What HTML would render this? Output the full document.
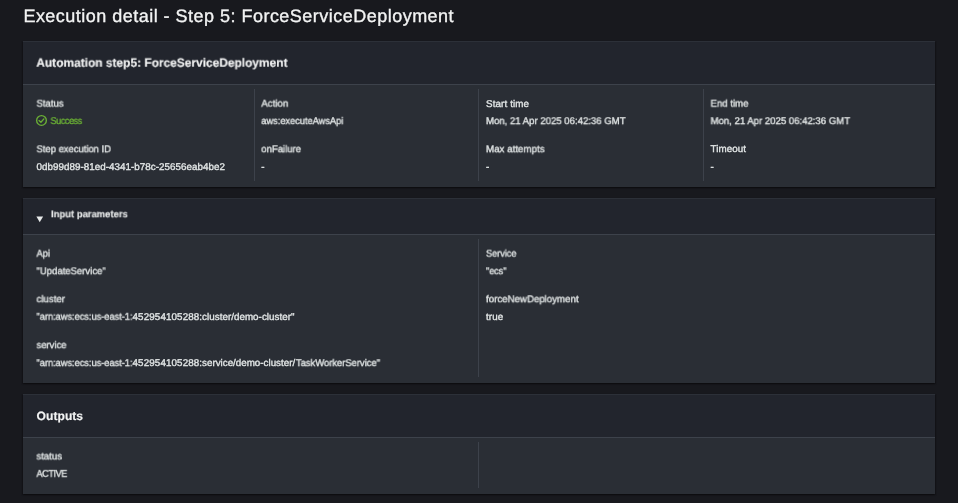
<!DOCTYPE html>
<html lang="en"><head><meta charset="utf-8"><title>Execution detail - Step 5: ForceServiceDeployment</title>
<style>
html,body{margin:0;padding:0;}
body{width:958px;height:503px;overflow:hidden;background:#18191e;position:relative;font-family:"Liberation Sans",sans-serif;color:#e2e6e6;}
.t{position:absolute;white-space:pre;text-rendering:geometricPrecision;transform-origin:0 0;will-change:transform;-webkit-text-stroke:0.35px currentColor;filter:blur(0.25px);}
.panel{position:absolute;left:23px;width:912px;background:#2a2e35;box-shadow:0 1px 2px 0 rgba(0,0,0,.28),1px 1px 1px 0 rgba(0,0,0,.16),-1px 1px 1px 0 rgba(0,0,0,.16);}
.hdr{position:absolute;left:0;top:0;width:100%;background:#22252d;border-top:1px solid #2c3038;border-bottom:1px solid #3d424b;box-sizing:border-box;}
.vd{position:absolute;width:1px;background:#3d424b;}
</style></head>
<body>
<div class="panel" style="top:41px;height:146px"><div class="hdr" style="height:44px"></div></div>
<div class="panel" style="top:198px;height:185px"><div class="hdr" style="height:37px"></div></div>
<div class="panel" style="top:394px;height:100px"><div class="hdr" style="height:44px"></div></div>
<div class="vd" style="left:254px;top:89px;height:92px"></div>
<div class="vd" style="left:478px;top:89px;height:92px"></div>
<div class="vd" style="left:703px;top:89px;height:92px"></div>
<div class="vd" style="left:478px;top:239px;height:138px"></div>
<div class="vd" style="left:478px;top:442px;height:46px"></div>
<svg style="position:absolute;left:35px;top:114px" width="13" height="13" viewBox="0 0 13 13" fill="none" stroke="#6aaf35" stroke-width="1.35" stroke-linecap="round" stroke-linejoin="round"><circle cx="6.5" cy="6.45" r="4.85"/><path d="M4.0 6.6l1.9 1.6L8.9 4.9"/></svg>
<svg style="position:absolute;left:36px;top:216px" width="8" height="8" viewBox="0 0 8 8"><path d="M0.4 0.5h6.7L3.75 6.2z" fill="#e8eaea"/></svg>
<div class="t" style="left:23px;top:5px;font-size:18.0px;line-height:22px;color:#f2f3f3;letter-spacing:0.479px;transform:translate(0.40px,0.00px);">Execution detail - Step 5: ForceServiceDeployment</div>
<div class="t" style="left:36px;top:54px;font-size:12.1px;line-height:16px;font-weight:700;-webkit-text-stroke:0.15px currentColor;color:#f2f3f3;transform:translate(0.30px,0.70px) scaleX(0.9862);">Automation step5: ForceServiceDeployment</div>
<div class="t" style="left:36px;top:97px;font-size:9.8px;line-height:13px;transform:translate(0.50px,0.60px) scaleX(0.9719);">Status</div>
<div class="t" style="left:50px;top:115px;font-size:9.8px;line-height:13px;color:#6aaf35;letter-spacing:-0.473px;transform:translate(0.50px,0.00px) scaleX(0.93);">Success</div>
<div class="t" style="left:36px;top:143px;font-size:9.8px;line-height:13px;transform:translate(0.50px,0.20px) scaleX(0.9632);">Step execution ID</div>
<div class="t" style="left:36px;top:160px;font-size:9.8px;line-height:13px;letter-spacing:0.047px;transform:translate(0.50px,0.70px);">0db99d89-81ed-4341-b78c-25656eab4be2</div>
<div class="t" style="left:261px;top:97px;font-size:9.8px;line-height:13px;transform:translate(0.30px,0.60px) scaleX(0.9951);">Action</div>
<div class="t" style="left:261px;top:115px;font-size:9.8px;line-height:13px;transform:translate(0.30px,0.10px) scaleX(0.9430);">aws:executeAwsApi</div>
<div class="t" style="left:261px;top:143px;font-size:9.8px;line-height:13px;transform:translate(0.30px,0.20px) scaleX(0.9695);">onFailure</div>
<div class="t" style="left:261px;top:160px;font-size:9.8px;line-height:13px;transform:translate(0.30px,0.70px);">-</div>
<div class="t" style="left:486px;top:97px;font-size:9.8px;line-height:13px;letter-spacing:0.120px;transform:translate(0.00px,0.60px);">Start time</div>
<div class="t" style="left:486px;top:115px;font-size:9.8px;line-height:13px;transform:translate(0.00px,0.10px) scaleX(0.9777);">Mon, 21 Apr 2025 06:42:36 GMT</div>
<div class="t" style="left:486px;top:143px;font-size:9.8px;line-height:13px;transform:translate(0.00px,0.20px) scaleX(0.9947);">Max attempts</div>
<div class="t" style="left:486px;top:160px;font-size:9.8px;line-height:13px;transform:translate(0.00px,0.70px);">-</div>
<div class="t" style="left:710px;top:97px;font-size:9.8px;line-height:13px;transform:translate(0.60px,0.60px) scaleX(0.9775);">End time</div>
<div class="t" style="left:710px;top:115px;font-size:9.8px;line-height:13px;transform:translate(0.60px,0.10px) scaleX(0.9770);">Mon, 21 Apr 2025 06:42:36 GMT</div>
<div class="t" style="left:710px;top:143px;font-size:9.8px;line-height:13px;letter-spacing:0.061px;transform:translate(0.60px,0.20px);">Timeout</div>
<div class="t" style="left:710px;top:160px;font-size:9.8px;line-height:13px;transform:translate(0.60px,0.70px);">-</div>
<div class="t" style="left:51px;top:208px;font-size:9.8px;line-height:13px;font-weight:700;-webkit-text-stroke:0.15px currentColor;color:#e6e8e8;transform:translate(0.00px,0.30px) scaleX(0.9660);">Input parameters</div>
<div class="t" style="left:36px;top:247px;font-size:9.8px;line-height:13px;transform:translate(0.50px,0.60px) scaleX(0.9526);">Api</div>
<div class="t" style="left:36px;top:265px;font-size:9.8px;line-height:13px;transform:translate(0.50px,0.20px) scaleX(0.9717);">&quot;UpdateService&quot;</div>
<div class="t" style="left:36px;top:293px;font-size:9.8px;line-height:13px;transform:translate(0.50px,0.20px) scaleX(0.9875);">cluster</div>
<div class="t" style="left:36px;top:310px;font-size:9.8px;line-height:13px;transform:translate(0.50px,0.70px) scaleX(0.9409);">&quot;arn:aws:ecs:us-east-1:</div>
<div class="t" style="left:132px;top:310px;font-size:9.8px;line-height:13px;letter-spacing:0.128px;transform:translate(0.50px,0.70px);">452954105288</div>
<div class="t" style="left:199px;top:310px;font-size:9.8px;line-height:13px;letter-spacing:0.038px;transform:translate(0.30px,0.70px);">:cluster/demo-cluster&quot;</div>
<div class="t" style="left:36px;top:339px;font-size:9.8px;line-height:13px;transform:translate(0.50px,0.20px) scaleX(0.9663);">service</div>
<div class="t" style="left:36px;top:357px;font-size:9.8px;line-height:13px;transform:translate(0.50px,0.10px) scaleX(0.9409);">&quot;arn:aws:ecs:us-east-1:</div>
<div class="t" style="left:132px;top:357px;font-size:9.8px;line-height:13px;letter-spacing:0.128px;transform:translate(0.50px,0.10px);">452954105288</div>
<div class="t" style="left:199px;top:357px;font-size:9.8px;line-height:13px;letter-spacing:0.003px;transform:translate(0.30px,0.10px);">:service/demo-cluster/</div>
<div class="t" style="left:295px;top:357px;font-size:9.8px;line-height:13px;transform:translate(0.90px,0.10px) scaleX(0.9591);">TaskWorkerService&quot;</div>
<div class="t" style="left:486px;top:247px;font-size:9.8px;line-height:13px;transform:translate(0.00px,0.60px) scaleX(0.9305);">Service</div>
<div class="t" style="left:486px;top:265px;font-size:9.8px;line-height:13px;letter-spacing:-0.067px;transform:translate(0.00px,0.20px) scaleX(0.93);">&quot;ecs&quot;</div>
<div class="t" style="left:486px;top:293px;font-size:9.8px;line-height:13px;transform:translate(0.00px,0.20px) scaleX(0.9887);">forceNewDeployment</div>
<div class="t" style="left:486px;top:310px;font-size:9.8px;line-height:13px;letter-spacing:0.103px;transform:translate(0.00px,0.70px);">true</div>
<div class="t" style="left:36px;top:407px;font-size:12.1px;line-height:16px;font-weight:700;-webkit-text-stroke:0.15px currentColor;color:#f2f3f3;letter-spacing:0.023px;transform:translate(0.60px,0.70px);">Outputs</div>
<div class="t" style="left:36px;top:450px;font-size:9.8px;line-height:13px;transform:translate(0.40px,0.40px) scaleX(0.9831);">status</div>
<div class="t" style="left:36px;top:467px;font-size:9.8px;line-height:13px;letter-spacing:-0.476px;transform:translate(0.50px,0.80px) scaleX(0.93);">ACTIVE</div>
</body></html>
